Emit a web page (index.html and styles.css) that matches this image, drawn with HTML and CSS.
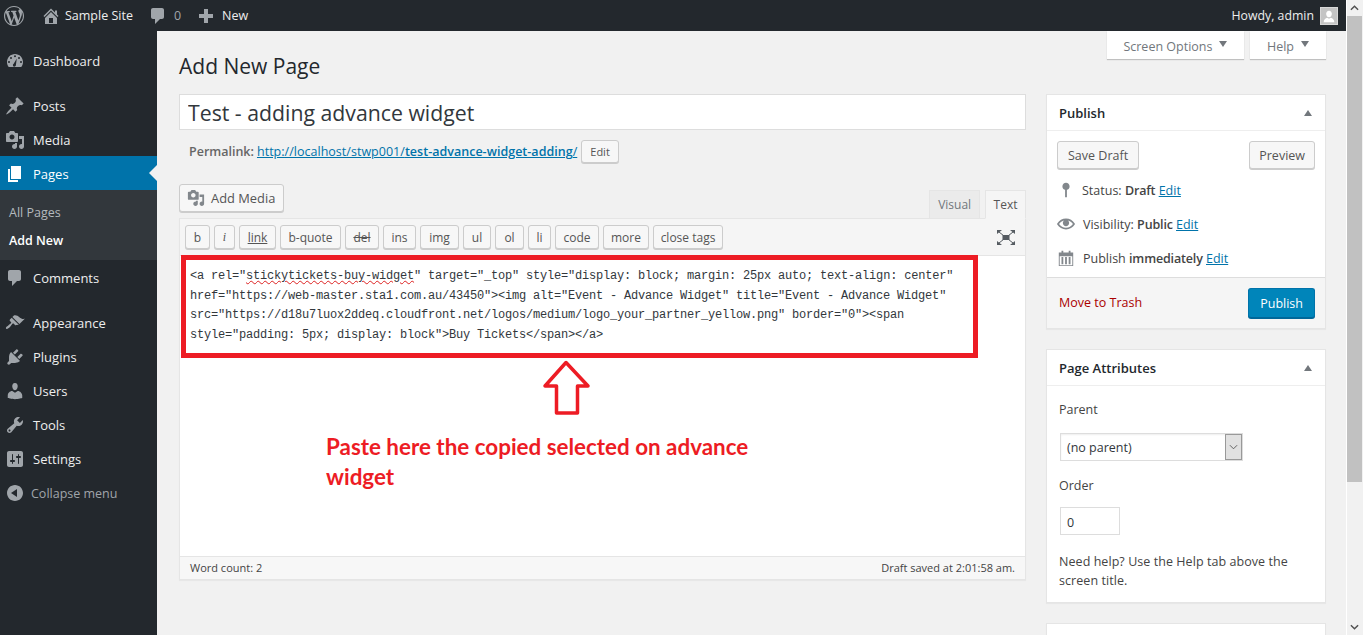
FILE: index.html
```html
<!DOCTYPE html>
<html lang="en">
<head>
<meta charset="utf-8">
<title>Add New Page</title>
<link rel="stylesheet" href="styles.css">
</head>
<body>
<div class="page">
  <header class="adminbar">
    <div class="bar-left">
      <svg class="bar-logo" viewBox="0 0 20 20"><path d="M20 10c0-5.510-4.490-10-10-10C4.480 0 0 4.490 0 10c0 5.520 4.480 10 10 10 5.510 0 10-4.480 10-10zM7.780 15.370L4.370 6.220c.55-.02 1.170-.08 1.170-.08.5-.06.44-1.130-.06-1.110 0 0-1.450.11-2.370.11-.18 0-.37 0-.58-.01C4.120 2.690 6.910 1.110 10 1.110c2.300 0 4.390.87 5.960 2.300-.66-.11-1.600.38-1.600 1.540 0 .72.44 1.330.88 2.050.35.61.55 1.360.55 2.460 0 1.490-1.400 5-1.400 5l-3.030-8.370c.54-.02.82-.17.82-.17.5-.05.44-1.250-.06-1.220 0 0-1.440.12-2.380.12-.87 0-2.330-.12-2.330-.12-.5-.03-.56 1.200-.06 1.220l.92.08 1.260 3.410zM17.410 10c.24-.64.74-1.870.43-4.250.7 1.290 1.050 2.710 1.050 4.250 0 3.290-1.730 6.240-4.400 7.780.97-2.590 1.940-5.200 2.920-7.780zM6.100 18.090C3.120 16.650 1.110 13.530 1.110 10c0-1.300.23-2.480.72-3.590C3.250 10.300 4.670 14.200 6.100 18.090zm4.030-6.630l2.580 6.980c-.86.29-1.760.45-2.710.45-.79 0-1.570-.11-2.290-.33.81-2.380 1.620-4.740 2.420-7.100z"/></svg>
      <svg class="bar-home" viewBox="0 0 20 20"><path d="M16 8.500l1.530 1.530-1.060 1.060L10 4.620l-6.470 6.470-1.060-1.060L10 2.500l4 4v-2h2v4zm-6-2.460l6 5.990V18H4v-5.970zM12 17v-5H8v5h4z"/></svg>
      <span class="bar-site">Sample Site</span>
      <svg class="bar-comment" viewBox="0 0 20 20"><path d="M5 2h9c1.100 0 2 .9 2 2v7c0 1.100-.9 2-2 2h-2l-5 5v-5H5c-1.100 0-2-.9-2-2V4c0-1.100.9-2 2-2z"/></svg>
      <span class="bar-count">0</span>
      <svg class="bar-plus" viewBox="0 0 20 20"><path d="M17 8v4h-5v5H8v-5H3V8h5V3h4v5z"/></svg>
      <span class="bar-new">New</span>
    </div>
    <div class="bar-right">
      <span class="howdy">Howdy, admin</span>
      <span class="avatar"><svg viewBox="0 0 18 18"><path d="M9 3c2 0 3.200 1.500 3.200 3.500S11 10.500 9 10.500 5.800 8.500 5.800 6.500 7 3 9 3zM3 16c0-2.800 2-4.500 4-5l2 1 2-1c2 .5 4 2.200 4 5z"/></svg></span>
    </div>
  </header>
  <div class="shell">
    <nav class="sidebar">
      <ul class="menu">
        <li class="item item-first"><svg class="mi" viewBox="0 0 20 20"><path fill-rule="evenodd" d="M3.760 16h12.480c1.100-1.370 1.760-3.110 1.760-5 0-4.420-3.580-8-8-8s-8 3.580-8 8c0 1.890.66 3.630 1.760 5zM10 4.200a1 1 0 1 0 0 2 1 1 0 0 0 0-2zM6 6a1 1 0 1 0 0 2 1 1 0 0 0 0-2zm8 0a1 1 0 1 0 0 2 1 1 0 0 0 0-2zM4 10a1 1 0 1 0 0 2 1 1 0 0 0 0-2zm12 0a1 1 0 1 0 0 2 1 1 0 0 0 0-2zM11.800 7.500L8.700 12.800a1.500 1.500 0 1 0 2.200 1.200z"/></svg>Dashboard</li>
        <li class="item item-group"><svg class="mi" viewBox="0 0 20 20"><path d="M10.440 3.020l1.820-1.820 6.360 6.350-1.830 1.820c-1.050-.68-2.480-.57-3.410.36l-.75.75c-.92.93-1.040 2.350-.35 3.410l-1.830 1.820-2.410-2.410-2.800 2.790c-.42.42-3.380 2.710-3.800 2.290s1.860-3.390 2.280-3.810l2.790-2.790L4.100 9.360l1.830-1.820c1.050.69 2.480.57 3.400-.36l.75-.75c.93-.92 1.050-2.350.36-3.410z"/></svg>Posts</li>
        <li class="item"><svg class="mi" viewBox="0 0 20 20"><path d="M13 11V4c0-.55-.45-1-1-1h-1.670L9 1H5L3.670 3H2c-.55 0-1 .45-1 1v7c0 .55.45 1 1 1h10c.55 0 1-.45 1-1zM7 4.500c1.380 0 2.500 1.120 2.500 2.500S8.380 9.500 7 9.500 4.500 8.380 4.500 7 5.620 4.500 7 4.500zM14 6h5v10.500c0 1.380-1.120 2.500-2.500 2.500S14 17.880 14 16.500s1.120-2.500 2.500-2.500c.17 0 .34.02.5.05V9h-3V6zm-4 8.050V13h2v3.500c0 1.380-1.120 2.500-2.500 2.500S7 17.880 7 16.500 8.120 14 9.500 14c.17 0 .34.02.5.05z"/></svg>Media</li>
        <li class="item item-current"><svg class="mi" viewBox="0 0 20 20"><path d="M6 15V2h10v13H6zm-1 1h8v2H3V5h2v11z"/></svg>Pages</li>
        <li class="submenu">
          <a class="sub-link">All Pages</a>
          <a class="sub-link sub-active">Add New</a>
        </li>
        <li class="item item-comments"><svg class="mi" viewBox="0 0 20 20"><path d="M5 2h9c1.100 0 2 .9 2 2v7c0 1.100-.9 2-2 2h-2l-5 5v-5H5c-1.100 0-2-.9-2-2V4c0-1.100.9-2 2-2z"/></svg>Comments</li>
        <li class="item item-group"><svg class="mi" viewBox="0 0 20 20"><path d="M14.480 11.060L7.410 3.990l1.500-1.500c.5-.56 2.300-.47 3.510.32 1.210.8 1.430 1.280 2.910 2.100 1.180.64 2.450 1.260 4.450.85zm-.71.71L6.700 4.700 4.930 6.470c-.39.39-.39 1.020 0 1.410l1.060 1.060c.39.39.39 1.030 0 1.420-.6.6-1.430 1.110-2.210 1.690-.35.26-.7.53-1.010.84C1.430 13.230.4 14.840 1.190 15.630c.79.79 2.400-.24 3.740-1.580.3-.31.58-.66.84-1.010.58-.78 1.090-1.610 1.690-2.210.39-.39 1.020-.39 1.410 0l1.060 1.060c.39.39 1.020.39 1.410 0z"/></svg>Appearance</li>
        <li class="item"><svg class="mi" viewBox="0 0 20 20"><path d="M13.110 4.360L9.870 7.600 8 5.730l3.240-3.240c.35-.34 1.050-.2 1.560.32.52.51.66 1.210.31 1.550zm-8 1.770l.91-1.120 9.010 9.010-1.190.84c-.71.71-2.630 1.160-3.820 1.160H6.140L4.900 17.260c-.59.59-1.540.59-2.120 0-.59-.58-.59-1.530 0-2.120l1.240-1.240v-3.880c0-1.130.4-3.190 1.090-3.890zm7.260 3.970l3.240-3.240c.34-.35 1.040-.21 1.550.31.52.51.66 1.210.31 1.550l-3.240 3.250z"/></svg>Plugins</li>
        <li class="item"><svg class="mi" viewBox="0 0 20 20"><path d="M10 9.250c-2.270 0-2.730-3.440-2.730-3.440C7 4.020 7.820 2 9.970 2c2.160 0 2.980 2.020 2.710 3.810 0 0-.41 3.440-2.680 3.440zm0 2.570L12.720 10c2.390 0 4.520 2.330 4.520 4.530v2.490s-3.650 1.130-7.240 1.130c-3.650 0-7.240-1.130-7.240-1.130v-2.490c0-2.250 1.940-4.480 4.470-4.480z"/></svg>Users</li>
        <li class="item"><svg class="mi" viewBox="0 0 20 20"><path d="M16.680 9.770c-1.340 1.340-3.300 1.670-4.950.99l-5.410 6.520c-.99.99-2.590.99-3.580 0s-.99-2.590 0-3.570l6.520-5.420c-.68-1.650-.35-3.610.99-4.950 1.280-1.280 3.120-1.620 4.720-1.060l-2.890 2.890 2.820 2.820 2.860-2.870c.53 1.580.18 3.390-1.080 4.650zM3.810 16.210c.4.39 1.040.39 1.430 0 .4-.4.4-1.040 0-1.430-.39-.4-1.030-.4-1.430 0-.39.39-.39 1.030 0 1.430z"/></svg>Tools</li>
        <li class="item"><svg class="mi" viewBox="0 0 20 20"><path d="M18 16V4c0-1.100-.9-2-2-2H4c-1.100 0-2 .9-2 2v12c0 1.100.9 2 2 2h12c1.100 0 2-.9 2-2zM8 11h1c.55 0 1 .45 1 1s-.45 1-1 1H8v1.500c0 .28-.22.5-.5.5s-.5-.22-.5-.5V13H6c-.55 0-1-.45-1-1s.45-1 1-1h1V5.500c0-.28.22-.5.5-.5s.5.22.5.5V11zm5-2h-1c-.55 0-1-.45-1-1s.45-1 1-1h1V5.500c0-.28.22-.5.5-.5s.5.22.5.5V7h1c.55 0 1 .45 1 1s-.45 1-1 1h-1v5.500c0 .28-.22.5-.5.5s-.5-.22-.5-.5V9z"/></svg>Settings</li>
        <li class="item item-collapse"><svg class="mi" viewBox="0 0 20 20"><path d="M10 2.010c4.420 0 8 3.580 8 8s-3.580 8-8 8-8-3.580-8-8 3.580-8 8-8zm2 12V6l-6 4z"/></svg>Collapse menu</li>
      </ul>
    </nav>
    <main class="content">
      <div class="topbar">
        <h1 class="title">Add New Page</h1>
        <div class="meta-tabs">
          <span class="meta-tab">Screen Options<i class="caret"></i></span>
          <span class="meta-tab">Help<i class="caret"></i></span>
        </div>
      </div>
      <div class="columns">
        <section class="col-main">
          <input class="title-input" type="text" value="Test - adding advance widget">
          <div class="permalink">
            <span class="perma-label">Permalink:</span>
            <a class="perma-url" href="#">http://localhost/stwp001/<b>test-advance-widget-adding</b>/</a>
            <span class="btn btn-small">Edit</span>
          </div>
          <div class="editor-head">
            <span class="btn btn-media"><svg class="media-icon" viewBox="0 0 20 20"><path d="M13 11V4c0-.55-.45-1-1-1h-1.670L9 1H5L3.670 3H2c-.55 0-1 .45-1 1v7c0 .55.45 1 1 1h10c.55 0 1-.45 1-1zM7 4.500c1.380 0 2.500 1.120 2.500 2.500S8.380 9.500 7 9.500 4.500 8.380 4.500 7 5.620 4.500 7 4.500zM14 6h5v10.500c0 1.380-1.120 2.500-2.500 2.500S14 17.880 14 16.500s1.120-2.500 2.500-2.500c.17 0 .34.02.5.05V9h-3V6zm-4 8.050V13h2v3.500c0 1.380-1.120 2.500-2.500 2.500S7 17.880 7 16.500 8.120 14 9.500 14c.17 0 .34.02.5.05z"/></svg>Add Media</span>
            <div class="editor-tabs">
              <span class="etab">Visual</span>
              <span class="etab etab-active">Text</span>
            </div>
          </div>
          <div class="editor">
            <div class="toolbar">
              <span class="qt qt-b">b</span>
              <span class="qt qt-i">i</span>
              <span class="qt qt-link">link</span>
              <span class="qt qt-quote">b-quote</span>
              <span class="qt qt-del">del</span>
              <span class="qt qt-ins">ins</span>
              <span class="qt qt-img">img</span>
              <span class="qt qt-ul">ul</span>
              <span class="qt qt-ol">ol</span>
              <span class="qt qt-li">li</span>
              <span class="qt qt-code">code</span>
              <span class="qt qt-more">more</span>
              <span class="qt qt-close">close tags</span>
              <svg class="dfw" viewBox="0 0 18 15"><path class="dfw-line" d="M2 2l14 11M16 2L2 13"/><path d="M0 0h5L0 4zM18 0h-5l5 4zM0 15h5l-5-4zM18 15h-5l5-4zM5.500 5h7v5h-7z"/></svg>
            </div>
            <div class="code-area">
              <div class="code">&lt;a rel="<span class="spell">stickytickets-buy-widget</span>" target="_top" style="display: block; margin: 25px auto; text-align: center"<br>href="https://web-master.sta1.com.au/43450"&gt;&lt;img alt="Event - Advance Widget" title="Event - Advance Widget"<br>src="https://d18u7luox2ddeq.cloudfront.net/logos/medium/logo_your_partner_yellow.png" border="0"&gt;&lt;span<br>style="padding: 5px; display: block"&gt;Buy Tickets&lt;/span&gt;&lt;/a&gt;</div>
              <div class="mark-box"></div>
              <svg class="mark-arrow" viewBox="0 0 50 58"><path d="M24 3.500L3 27h11.500v27h21V27H46z"/></svg>
              <p class="mark-text">Paste here the copied selected on advance widget</p>
            </div>
            <div class="statusbar">
              <span class="st-text">Word count: 2</span>
              <span class="st-text">Draft saved at 2:01:58 am.</span>
            </div>
          </div>
        </section>
        <aside class="col-side">
          <section class="box">
            <div class="box-head"><h2 class="box-title">Publish</h2><i class="box-toggle"></i></div>
            <div class="pub-actions">
              <span class="btn btn-side">Save Draft</span>
              <span class="btn btn-side btn-preview">Preview</span>
            </div>
            <div class="pub-row pub-status"><svg class="pub-icon" viewBox="0 0 20 20"><path d="M14 6c0-2.210-1.790-4-4-4S6 3.790 6 6c0 1.860 1.280 3.410 3 3.860V18h2V9.860c1.720-.45 3-2 3-3.860z"/></svg><span>Status: <b>Draft</b> <a href="#">Edit</a></span></div>
            <div class="pub-row"><svg class="pub-icon" viewBox="0 0 20 20"><path d="M19.700 9.400C17.700 6 14 3.900 10 3.900S2.300 6 .3 9.400L0 10l.3.6c2 3.400 5.700 5.500 9.700 5.500s7.700-2.100 9.700-5.500l.3-.6-.3-.6zM10 14.100c-3.100 0-6-1.600-7.700-4.100C3.600 8 5.700 6.600 8 6.100c-.9.6-1.500 1.700-1.500 2.900 0 1.900 1.600 3.500 3.500 3.500s3.500-1.600 3.500-3.500c0-1.200-.6-2.300-1.500-2.900 2.300.5 4.400 1.900 5.700 3.900-1.700 2.500-4.600 4.100-7.700 4.100z"/></svg><span>Visibility: <b>Public</b> <a href="#">Edit</a></span></div>
            <div class="pub-row"><svg class="pub-icon" viewBox="0 0 20 20"><path d="M15 4h3v15H2V4h3V2h2v2h6V2h2zM3 8v10h14V8zm2 1h2v8H5zm4 0h2v8H9zm4 0h2v8h-2z"/></svg><span>Publish <b>immediately</b> <a href="#">Edit</a></span></div>
            <div class="pub-foot">
              <a class="trash" href="#">Move to Trash</a>
              <span class="btn-primary">Publish</span>
            </div>
          </section>
          <section class="box">
            <div class="box-head"><h2 class="box-title">Page Attributes</h2><i class="box-toggle"></i></div>
            <div class="attr-body">
              <p class="attr-label">Parent</p>
              <div class="select"><span class="select-text">(no parent)</span><span class="select-arrow"><svg viewBox="0 0 10 6"><path d="M1 1l4 4 4-4"/></svg></span></div>
              <p class="attr-label attr-order">Order</p>
              <input class="order-input" type="text" value="0">
              <p class="attr-help">Need help? Use the Help tab above the screen title.</p>
            </div>
          </section>
          <section class="box box-stub"></section>
        </aside>
      </div>
    </main>
  </div>
</div>
<div class="scrollbar">
  <svg class="sb-arrow" viewBox="0 0 10 6"><path d="M1 5l4-4 4 4"/></svg>
  <div class="sb-thumb"></div>
  <svg class="sb-arrow sb-down" viewBox="0 0 10 6"><path d="M1 1l4 4 4-4"/></svg>
</div>
</body>
</html>
```
FILE: styles.css
```css
* { box-sizing: border-box; }
html, body { margin: 0; height: 635px; overflow: hidden; }
body {
  display: flex;
  background: #f1f1f1;
  font-family: "Open Sans", "Noto Sans", sans-serif;
  font-size: 12.5px;
  color: #444;
}
.page { flex: 1; min-width: 0; display: flex; flex-direction: column; height: 635px; overflow: hidden; }

/* admin bar */
.adminbar {
  height: 31px;
  flex: none;
  background: #23282d;
  color: #eee;
  display: flex;
  justify-content: space-between;
  align-items: center;
  font-size: 12.5px;
}
.adminbar svg { fill: #a0a5aa; display: block; flex: none; }
.bar-left { display: flex; align-items: center; padding-left: 4px; }
.bar-logo { width: 20px; height: 20px; }
.bar-home { width: 20px; height: 20px; margin-left: 17px; }
.bar-site { margin-left: 4px; }
.bar-comment { width: 20px; height: 20px; margin-left: 15px; }
.bar-count { color: #a0a5aa; margin-left: 6px; }
.bar-plus { width: 20px; height: 20px; margin-left: 15px; }
.bar-new { margin-left: 6px; }
.bar-right { display: flex; align-items: center; padding-right: 8px; }
.howdy { font-size: 12.3px; }
.avatar { width: 18px; height: 18px; margin-left: 6px; background: #c4c4c4; border: 1px solid #d8d8d8; display: block; }
.adminbar .avatar svg { fill: #fff; width: 16px; height: 16px; }

.shell { flex: 1; display: flex; min-height: 0; }

/* sidebar */
.sidebar { width: 157px; flex: none; background: #23282d; color: #eee; }
.menu { list-style: none; margin: 0; padding: 13px 0 0; font-size: 13px; }
.item { height: 34px; display: flex; align-items: center; padding: 2px 0 0 5px; position: relative; }
.mi { width: 20px; height: 20px; fill: #a0a5aa; margin-right: 8px; flex: none; }
.item-group { margin-top: 10px; }
.item-first { padding-top: 0; }
.item-current { background: #0073aa; color: #fff; }
.item-current .mi { fill: #fff; }
.item-current::after {
  content: "";
  position: absolute;
  right: 0;
  top: 50%;
  margin-top: -8px;
  border: 8px solid transparent;
  border-right-color: #f1f1f1;
  border-left-width: 0;
}
.submenu { background: #32373c; height: 70px; padding: 8px 0 0 9px; font-size: 12.5px; }
.sub-link { display: flex; align-items: center; height: 28px; color: #b4b9be; }
.sub-active { color: #fff; font-weight: 600; }
.item-comments { margin-top: 1px; padding-top: 0; }
.item-collapse { color: #a0a5aa; font-size: 12.5px; }
.item-collapse .mi { margin-right: 6px; }

/* content */
.content { flex: 1; min-width: 0; padding: 0 20px 0 22px; }
.topbar { height: 63px; display: flex; justify-content: space-between; align-items: flex-start; }
.title { margin: 0; padding-top: 19px; font-size: 21px; font-weight: 400; line-height: 32px; color: #23282d; }
.meta-tabs { display: flex; gap: 6px; }
.meta-tab {
  height: 28px;
  padding: 2px 17px 0 16.5px;
  background: #fff;
  color: #72777c;
  box-shadow: 0 1px 1px rgba(0,0,0,.2);
  display: flex;
  align-items: center;
}
.caret { width: 0; height: 0; margin-left: 7px; margin-top: -4px; border: 4px solid transparent; border-top: 6px solid #72777c; border-bottom: 0; }

.columns { display: flex; gap: 20px; align-items: flex-start; }
.col-main { flex: 1; min-width: 0; }
.col-side { width: 280px; flex: none; }

.title-input {
  display: block;
  width: 100%;
  height: 36px;
  border: 1px solid #ddd;
  background: #fff;
  padding: 0 8px;
  font: 400 21.25px "Open Sans", sans-serif;
  color: #32373c;
  outline: 0;
}
.permalink { display: flex; align-items: center; height: 23px; margin-top: 10px; padding-left: 10px; color: #666; }
.perma-label { font-weight: 600; }
.perma-url { color: #0073aa; margin-left: 3px; letter-spacing: .02px; }
.perma-url b { font-weight: 600; }
.btn {
  display: inline-flex;
  align-items: center;
  justify-content: center;
  background: #f7f7f7;
  border: 1px solid #ccc;
  border-radius: 3px;
  box-shadow: 0 1px 0 #ccc;
  color: #555;
}
.btn-small { height: 23px; padding: 0 8px; margin-left: 4px; font-size: 11px; }
.editor-head { display: flex; justify-content: space-between; align-items: flex-start; height: 34px; margin-top: 21px; }
.btn-media { height: 28px; padding: 0 7.5px 0 7px; font-size: 12.9px; }
.media-icon { width: 18px; height: 18px; fill: #82878c; margin-right: 6px; }
.editor-tabs { display: flex; gap: 5px; margin-top: 6px; position: relative; z-index: 1; }
.etab {
  height: 29px;
  padding: 0 8px;
  background: #ebebeb;
  border: 1px solid #e5e5e5;
  color: #72777c;
  display: flex;
  align-items: center;
  font-size: 12px;
}
.etab-active { padding: 0 7.5px; background: #f5f5f5; border-bottom-color: #f5f5f5; color: #555; }

.editor { border: 1px solid #e5e5e5; background: #fff; box-shadow: 0 1px 1px rgba(0,0,0,.04); }
.toolbar {
  height: 37px;
  background: #f5f5f5;
  border-bottom: 1px solid #e5e5e5;
  display: flex;
  align-items: center;
  gap: 4px;
  padding: 0 10px 0 5px;
}
.qt {
  height: 24px;
  background: #f7f7f7;
  border: 1px solid #ccc;
  border-radius: 3px;
  box-shadow: 0 1px 0 #ccc;
  color: #555;
  font-size: 12px;
  display: flex;
  align-items: center;
  justify-content: center;
  flex: none;
}
.qt-b { width: 25px; }
.qt-i { width: 21px; font-style: italic; font-family: "Liberation Serif", serif; }
.qt-link { width: 37px; text-decoration: underline; }
.qt-quote { width: 61px; }
.qt-del { width: 34px; text-decoration: line-through; }
.qt-ins { width: 33px; }
.qt-img { width: 39px; }
.qt-ul { width: 28px; }
.qt-ol { width: 29px; }
.qt-li { width: 23px; }
.qt-code { width: 44px; }
.qt-more { width: 46px; }
.qt-close { width: 70px; }
.dfw { width: 18px; height: 15px; margin-left: auto; fill: #555b61; flex: none; }
.dfw-line { fill: none; stroke: #555b61; stroke-width: 1; }

.code-area { position: relative; height: 300px; }
.code {
  padding: 11px 0 0 10px;
  font: 12px/19.5px "Liberation Mono", monospace;
  letter-spacing: -.2px;
  color: #32373c;
  white-space: nowrap;
}
.spell { text-decoration: underline wavy #d22; text-decoration-thickness: 1px; }
.mark-box { position: absolute; left: 1px; top: -1px; width: 797px; height: 103px; border: 5px solid #ed1c24; }
.mark-arrow { position: absolute; left: 362px; top: 103px; width: 50px; height: 58px; fill: none; stroke: #ed1c24; stroke-width: 3.500; stroke-linejoin: round; }
.mark-text {
  position: absolute;
  left: 146px;
  top: 176px;
  width: 440px;
  margin: 0;
  font: 700 22.4px/30px "Lato", sans-serif;
  color: #ed1c24;
}
.statusbar {
  height: 23px;
  background: #f7f7f7;
  border-top: 1px solid #e5e5e5;
  display: flex;
  justify-content: space-between;
  align-items: center;
  padding: 0 10px 1px;
}
.st-text { font-size: 11px; color: #444; }

/* side boxes */
.box { background: #fff; border: 1px solid #e5e5e5; box-shadow: 0 1px 1px rgba(0,0,0,.04); margin-bottom: 20px; }
.box-head { height: 36px; border-bottom: 1px solid #eee; display: flex; align-items: center; justify-content: space-between; padding: 0 13px 0 12px; }
.box-title { margin: 0; font-size: 13px; font-weight: 600; color: #23282d; }
.box-toggle { width: 0; height: 0; border: 4.500px solid transparent; border-top: 0; border-bottom: 6px solid #72777c; }
.pub-actions { display: flex; justify-content: space-between; padding: 10px 10px 0; }
.btn-side { height: 28px; padding: 0 10px; }
.btn-preview { padding: 0 9px; }
.pub-row { display: flex; align-items: center; height: 34px; padding-left: 10px; color: #444; }
.pub-status { margin-top: 4px; }
.pub-row b { font-weight: 600; letter-spacing: -.15px; }
.pub-row a { color: #0073aa; text-decoration: underline; }
.pub-icon { width: 18px; height: 18px; fill: #82878c; margin-right: 8px; flex: none; }
.pub-status .pub-icon { margin-right: 7px; }
.pub-foot {
  height: 51px;
  margin-top: 2px;
  background: #f5f5f5;
  border-top: 1px solid #ddd;
  display: flex;
  justify-content: space-between;
  align-items: center;
  padding: 0 10px 0 12px;
}
.trash { color: #a00; text-decoration: none; margin-bottom: 2px; }
.btn-primary {
  height: 30px;
  padding: 0 11px;
  background: #0085ba;
  border: 1px solid #0073aa;
  border-bottom-color: #006799;
  border-radius: 3px;
  box-shadow: 0 1px 0 #006799;
  color: #fff;
  display: flex;
  align-items: center;
}
.attr-body { padding: 15px 12px 0; height: 216px; }
.attr-label { margin: 0; line-height: 18px; color: #444; }
.select {
  width: 183px;
  height: 28px;
  margin: 14px 0 0 1px;
  border: 1px solid #ddd;
  display: flex;
  justify-content: space-between;
  align-items: center;
  padding-left: 6px;
  box-shadow: inset 0 1px 2px rgba(0,0,0,.07);
}
.select-text { color: #32373c; padding-top: 1px; }
.select-arrow { width: 17px; height: 26px; background: #e1e1e1; border: 1px solid #999; display: flex; align-items: center; justify-content: center; }
.select-arrow svg { width: 9px; height: 6px; fill: none; stroke: #555; }
.attr-order { margin-top: 16px; }
.order-input {
  display: block;
  width: 60px;
  height: 28px;
  margin: 12px 0 0 1px;
  border: 1px solid #ddd;
  padding: 2px 6px 0;
  font: 12.5px "Open Sans", sans-serif;
  color: #32373c;
  outline: 0;
}
.attr-help { margin: 17px 0 0; line-height: 19px; letter-spacing: .06px; }
.box-stub { height: 60px; }

/* scrollbar */
.scrollbar { width: 17px; flex: none; background: #f1f1f1; border-left: 1px solid #fff; height: 635px; display: flex; flex-direction: column; align-items: flex-start; }
.sb-arrow { width: 9px; height: 6px; margin: 5px 0 5px 3px; fill: none; stroke: #505050; stroke-width: 1.6; flex: none; }
.sb-thumb { width: 15px; height: 466px; background: #c1c1c1; flex: none; }
.sb-down { margin-top: auto; margin-bottom: 5px; }
```
